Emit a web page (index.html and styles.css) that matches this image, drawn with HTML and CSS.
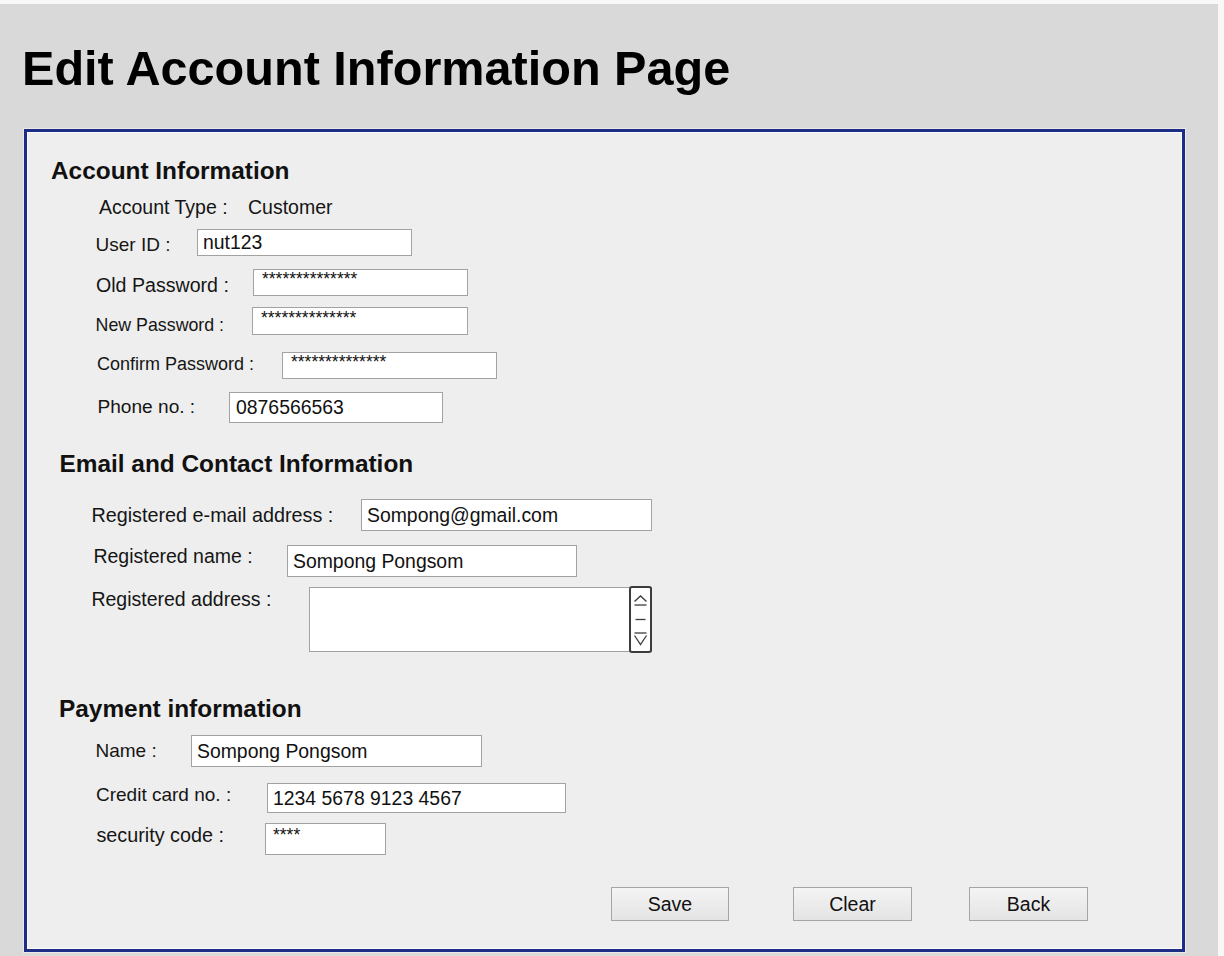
FILE: index.html
```html
<!DOCTYPE html>
<html lang="en">
<head>
<meta charset="utf-8">
<title>Edit Account Information Page</title>
<link rel="stylesheet" href="styles.css">
</head>
<body>
<div class="page">
  <h1 class="title">Edit Account Information Page</h1>
  <form class="panel">
    <h2 class="sec sec-account">Account Information</h2>
    <div class="row r-type"><span class="lbl">Account Type :</span><span class="val">Customer</span></div>
    <div class="row r-user"><label class="lbl" for="uid">User ID :</label><input id="uid" class="fld" type="text" value="nut123"></div>
    <div class="row r-old"><label class="lbl" for="opw">Old Password :</label><input id="opw" class="fld pw" type="text" value="**************"></div>
    <div class="row r-new"><label class="lbl" for="npw">New Password :</label><input id="npw" class="fld pw" type="text" value="**************"></div>
    <div class="row r-conf"><label class="lbl" for="cpw">Confirm Password :</label><input id="cpw" class="fld pw" type="text" value="**************"></div>
    <div class="row r-phone"><label class="lbl" for="phone">Phone no. :</label><input id="phone" class="fld" type="text" value="0876566563"></div>

    <h2 class="sec sec-email">Email and Contact Information</h2>
    <div class="row r-email"><label class="lbl" for="mail">Registered e-mail address :</label><input id="mail" class="fld" type="text" value="Sompong@gmail.com"></div>
    <div class="row r-rname"><label class="lbl" for="rname">Registered name :</label><input id="rname" class="fld" type="text" value="Sompong Pongsom"></div>
    <div class="row r-addr"><span class="lbl">Registered address :</span>
      <div class="area">
        <div class="scroll">
          <svg width="19" height="63" viewBox="0 0 19 63" fill="none" stroke="#3c3c3c" stroke-width="1.3">
            <polyline points="3.5,13.5 9.5,8 15.5,13.5"/>
            <line x1="3.5" y1="17" x2="15.5" y2="17"/>
            <line x1="4.5" y1="31.5" x2="14.5" y2="31.5"/>
            <line x1="3.5" y1="45" x2="15.5" y2="45"/>
            <polyline points="3.5,47.5 9.5,56.5 15.5,47.5"/>
          </svg>
        </div>
      </div>
    </div>

    <h2 class="sec sec-pay">Payment information</h2>
    <div class="row r-pname"><label class="lbl" for="pname">Name :</label><input id="pname" class="fld" type="text" value="Sompong Pongsom"></div>
    <div class="row r-credit"><label class="lbl" for="card">Credit card no. :</label><input id="card" class="fld" type="text" value="1234 5678 9123 4567"></div>
    <div class="row r-sec"><label class="lbl" for="code">security code :</label><input id="code" class="fld pw" type="text" value="****"></div>

    <div class="buttons">
      <button type="button" class="btn btn-save">Save</button>
      <button type="button" class="btn btn-clear">Clear</button>
      <button type="button" class="btn btn-back">Back</button>
    </div>
  </form>
</div>
</body>
</html>
```

FILE: styles.css
```css
html {
  margin: 0;
  height: 956px;
  overflow: hidden;
  background: #f8f8f8;
}
body {
  margin: 4px 6px 0 0;
  min-height: 952px;
  background: #d9d9d9;
  font-family: "Liberation Sans", Arial, sans-serif;
  color: #111;
}
.page {
  padding-top: 36px;
}
.title {
  margin: 0 0 0 22px;
  font-size: 48.6px;
  line-height: 56px;
  font-weight: bold;
  color: #000;
}
.panel {
  box-sizing: border-box;
  width: 1161px;
  height: 823px;
  margin: 33px 0 0 24px;
  border: 3px solid #1d2d86;
  background: #eeeeee;
  box-shadow: 0 0 0 1px #e9e9e9, inset 0 0 0 1px #fbfbfb;
  padding: 0 0 28px 0;
  display: flex;
  flex-direction: column;
  align-items: flex-start;
}
.sec {
  margin: 0;
  font-size: 24.4px;
  line-height: 28px;
  font-weight: bold;
  color: #111;
}
.sec-account { margin-top: 25px; margin-left: 24px; }
.sec-email { margin-top: 27px; margin-left: 32.5px; }
.sec-pay { margin-top: 43px; margin-left: 32px; }

.row {
  display: flex;
  align-items: flex-start;
}
.lbl {
  flex: none;
  font-size: 19.5px;
  line-height: 20px;
  white-space: nowrap;
  color: #151515;
}
.val {
  font-size: 19.5px;
  line-height: 20px;
  color: #151515;
}
.fld {
  box-sizing: border-box;
  margin: 0;
  padding: 0 0 0 5px;
  border: 1px solid #a2a2a2;
  border-radius: 0;
  background: #fff;
  font-family: "Liberation Sans", Arial, sans-serif;
  font-size: 19.4px;
  color: #111;
  outline: none;
}
.fld.pw {
  font-size: 17.5px;
  padding: 0 0 6px 8px;
}

/* Account information rows */
.r-type { margin-top: 12px; }
.r-type .lbl { margin-left: 72px; width: 149px; }

.r-user { margin-top: 12px; }
.r-user .lbl { margin-left: 68.5px; width: 101.5px; margin-top: 6px; font-size: 19px; }
.r-user .fld { width: 215px; height: 27px; }

.r-old { margin-top: 13px; }
.r-old .lbl { margin-left: 69px; width: 157px; margin-top: 6px; font-size: 19.6px; }
.r-old .fld { width: 215px; height: 27px; }

.r-new { margin-top: 11px; }
.r-new .lbl { margin-left: 68.6px; width: 156.4px; margin-top: 8px; font-size: 17.8px; }
.r-new .fld { width: 216px; height: 28px; }

.r-conf { margin-top: 17px; }
.r-conf .lbl { margin-left: 70px; width: 185px; margin-top: 2px; font-size: 18px; }
.r-conf .fld { width: 215px; height: 27px; }

.r-phone { margin-top: 13px; }
.r-phone .lbl { margin-left: 70.5px; width: 131.5px; margin-top: 5px; font-size: 19.1px; }
.r-phone .fld { width: 214px; height: 31px; padding-left: 6px; }

/* Email rows */
.r-email { margin-top: 21px; }
.r-email .lbl { margin-left: 64.4px; width: 269.6px; margin-top: 6px; font-size: 19.8px; }
.r-email .fld { width: 291px; height: 32px; }

.r-rname { margin-top: 14px; }
.r-rname .lbl { margin-left: 66.4px; width: 193.6px; margin-top: 1px; }
.r-rname .fld { width: 290px; height: 32px; }

.r-addr { margin-top: 10px; }
.r-addr .lbl { margin-left: 64.4px; width: 217.6px; margin-top: 2px; }
.area {
  box-sizing: border-box;
  width: 343px;
  height: 65px;
  border: 1px solid #a2a2a2;
  background: #fff;
  display: flex;
  justify-content: flex-end;
}
.scroll {
  box-sizing: border-box;
  width: 23px;
  height: 67px;
  margin: -2px -1px 0 0;
  border: 2px solid #3c3c3c;
  border-radius: 3px;
  background: #fff;
}
.scroll svg { display: block; }

/* Payment rows */
.r-pname { margin-top: 12px; }
.r-pname .lbl { margin-left: 68.5px; width: 95.5px; margin-top: 6px; font-size: 19px; }
.r-pname .fld { width: 291px; height: 32px; }

.r-credit { margin-top: 16px; }
.r-credit .lbl { margin-left: 69px; width: 171px; margin-top: 2px; font-size: 19px; }
.r-credit .fld { width: 299px; height: 30px; }

.r-sec { margin-top: 10px; }
.r-sec .lbl { margin-left: 69.4px; width: 168.6px; margin-top: 2px; font-size: 19.8px; }
.r-sec .fld { width: 121px; height: 32px; padding-left: 7px; padding-bottom: 8px; }

/* Buttons */
.buttons {
  display: flex;
  margin: 32px 0 0 584px;
}
.btn {
  box-sizing: border-box;
  width: 119px;
  height: 34px;
  margin: 0;
  padding: 0;
  border: 1px solid #a6a6a6;
  border-radius: 0;
  background: linear-gradient(#f4f4f4, #e4e4e4);
  font-family: "Liberation Sans", Arial, sans-serif;
  font-size: 19.5px;
  color: #111;
}
.btn-save { width: 118px; }
.btn-clear { margin-left: 64px; }
.btn-back { margin-left: 57px; }
```
